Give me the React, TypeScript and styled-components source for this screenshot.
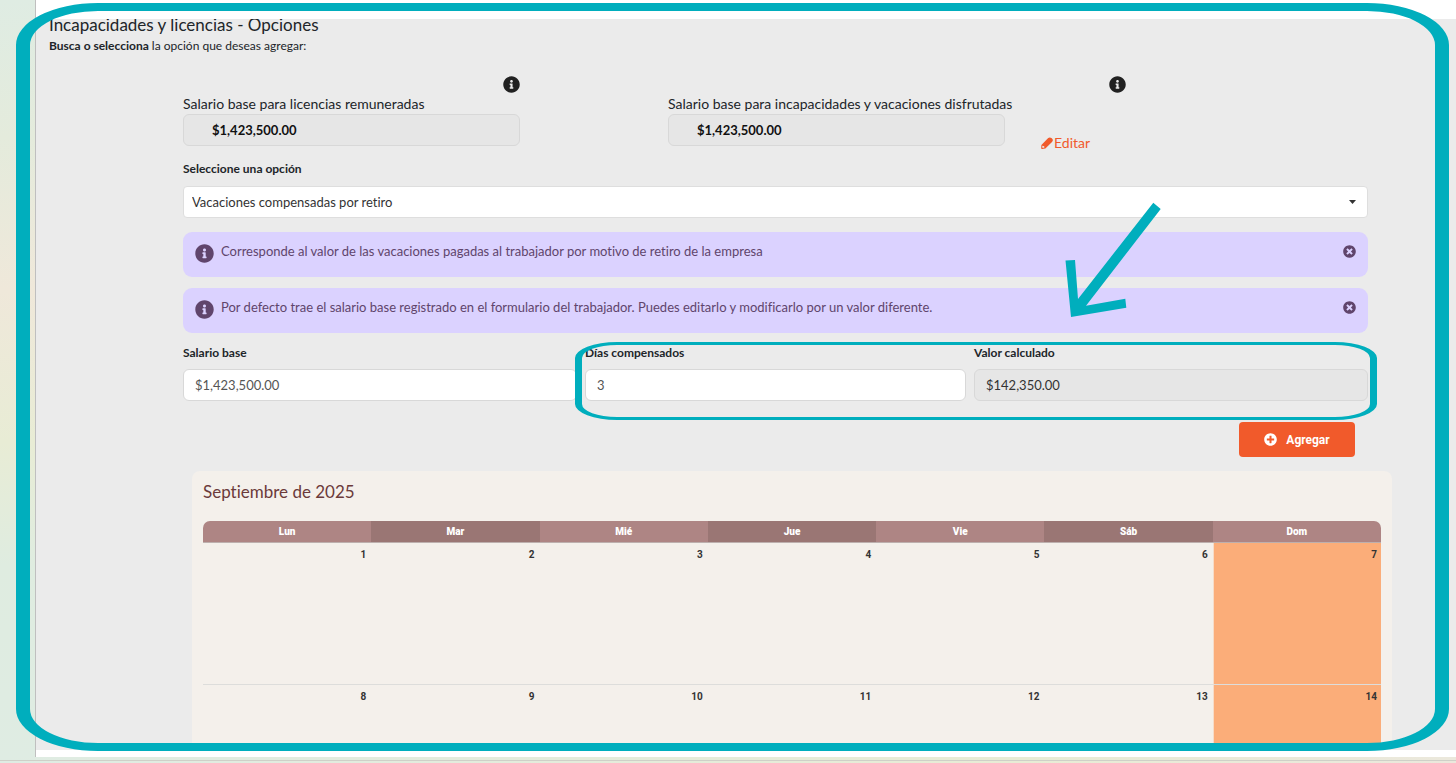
import React, { useState } from "react";
import styled, { createGlobalStyle, css } from "styled-components";
import { FaInfoCircle, FaPlusCircle, FaTimesCircle } from "react-icons/fa";

const TEAL = "#00aebd";
const ORANGE = "#f15a2b";

const GlobalStyle = createGlobalStyle`
  * { box-sizing: border-box; }
  html, body, #root { height: 100%; }
  body {
    margin: 0;
    font-family: Lato, "Liberation Sans", sans-serif;
    font-size: 13px;
    font-variant-ligatures: none;
    color: #212529;
  }
  input, select, button { font: inherit; color: inherit; }
`;

const Page = styled.div`
  position: relative;
  height: 100vh;
  display: flex;
  flex-direction: column;
  overflow: hidden;
  background: linear-gradient(#dfece3 0%, #e4ebdc 18%, #efe8da 38%, #e8ecd5 58%, #dfece0 74%, #dfece3 100%);
`;

const Sheet = styled.div`
  flex: 1;
  min-height: 0;
  margin-left: 35px;
  padding: 19px 0 7px;
  border-left: 1px solid #bfbfbf;
  background: #fff;
  display: flex;
`;

const Footer = styled.footer`
  height: 6px;
  padding-top: 3px;
  background: linear-gradient(90deg, #dfece3, #e8ecd5 70%, #ebe8dc);

  &::before {
    content: "";
    display: block;
    height: 1px;
    background: #cfd0c8;
  }
`;

const Panel = styled.main`
  flex: 1;
  min-width: 0;
  overflow: hidden;
  background: #ebebeb;
`;

const Heading = styled.header`
  padding-left: 13px;
`;

const Title = styled.h1`
  margin: 0;
  font-size: 17px;
  line-height: 12px;
  font-weight: 400;
`;

const Lead = styled.p`
  margin: 6px 0 0;
  font-size: 12px;
  line-height: 18px;
`;

const Content = styled.section`
  padding: 21px 88px 0 147px;
`;

const BaseRow = styled.div`
  display: grid;
  grid-template-columns: 337fr 148fr 458fr 242fr;

  > * { min-width: 0; }
`;

const InfoLine = styled.div`
  height: 18px;
  display: flex;
  justify-content: flex-end;
`;

const BaseLine = styled.div`
  display: flex;
  gap: 36px;
`;

const BaseField = styled.div`
  flex: 1;
  min-width: 0;
`;

const BaseLabel = styled.label`
  display: block;
  font-size: 14px;
  line-height: 20px;
  white-space: nowrap;
`;

const inputBox = css`
  display: block;
  width: 100%;
  height: 32px;
  border: 1px solid #d8d8d8;
  border-radius: 6px;
  background: #fff;
  outline: none;
`;

const BaseInput = styled.input`
  ${inputBox}
  padding: 0 28px;
  font-weight: 700;
  color: #111;
  background: #e6e6e6;
`;

const EditLink = styled.a`
  width: 85px;
  align-self: flex-start;
  display: flex;
  align-items: center;
  gap: 1px;
  padding-top: 39px;
  font-size: 14px;
  line-height: 20px;
  color: ${ORANGE};
  text-decoration: none;
`;

const Label = styled.label`
  display: block;
  font-size: 12px;
  font-weight: 700;
  line-height: 18px;
`;

const OptionField = styled.div`
  margin-top: 7px;
`;

const SelectBox = styled.div`
  display: grid;
  align-items: center;
  margin-top: 8px;

  > * { grid-area: 1 / 1; }
  > svg { justify-self: end; margin-right: 12px; pointer-events: none; }
`;

const Select = styled.select`
  width: 100%;
  height: 32px;
  padding: 0 30px 0 8px;
  border: 1px solid #dedede;
  border-radius: 4px;
  background: #fff;
  color: #333;
  appearance: none;
`;

const Alerts = styled.div`
  display: grid;
  gap: 11px;
  margin-top: 14px;
`;

const AlertBox = styled.div`
  display: flex;
  align-items: flex-start;
  height: 45px;
  padding: 10px 12px;
  border-radius: 9px;
  background: #dbd2ff;
  color: #60456c;
`;

const AlertText = styled.p`
  flex: 1;
  margin: 0 0 0 7px;
  line-height: 18px;
`;

const AlertIcon = styled(FaInfoCircle)`
  flex: none;
  margin-top: 2px;
`;

const CloseButton = styled.button`
  display: flex;
  padding: 0;
  margin-top: 3px;
  border: 0;
  background: none;
`;

const ValueRow = styled.div`
  display: grid;
  grid-template-columns: 394fr 381fr 394fr;
  gap: 8px;
`;

const ValueInput = styled.input`
  ${inputBox}
  margin-top: 7px;
  padding: 0 11px;
  color: #555;

  &:read-only {
    color: #333;
    background: #e6e6e6;
  }
`;

const Actions = styled.div`
  display: flex;
  justify-content: flex-end;
  padding: 21px 13px 14px;
`;

const AddButton = styled.button`
  display: flex;
  align-items: center;
  justify-content: center;
  gap: 9px;
  width: 116px;
  height: 35px;
  border: 0;
  border-radius: 4px;
  background: ${ORANGE};
  color: #fff;
  font-family: Roboto, sans-serif;
  font-size: 12px;
  font-weight: 700;
`;

const CalendarCard = styled.section`
  margin: 0 -24px 0 9px;
  padding: 10px 11px 0;
  border-radius: 8px;
  background: #f4f0eb;
`;

const Month = styled.h2`
  margin: 0;
  font-size: 17px;
  line-height: 22px;
  font-weight: 400;
  color: #6b3a3a;
`;

const Calendar = styled.table`
  width: 100%;
  margin-top: 18px;
  border-spacing: 0;
  table-layout: fixed;
  font-family: Roboto, sans-serif;
  font-size: 10px;
`;

const DayName = styled.th`
  height: 22px;
  padding: 0;
  border-bottom: 1px solid #bdb0ae;
  font-weight: 900;
  color: #fff;
  background: #ae8584;

  &:nth-child(even) { background: #9a7674; }
  &:first-child { border-top-left-radius: 7px; }
  &:last-child { border-top-right-radius: 7px; }
`;

const Day = styled.td`
  height: 142px;
  padding: 6px 5px 0 0;
  border-bottom: 1px solid #dddddb;
  vertical-align: top;
  text-align: right;
  line-height: 12px;
  font-weight: 700;
  color: #333;

  &:last-child { background: #fbad79; padding-right: 4px; border-left: 1px solid #f7dcc8; }
`;

const PanelFrame = styled.div`
  position: absolute;
  inset: 3px 7px 12px 16px;
  border: solid ${TEAL};
  border-width: 8px 14px;
  border-radius: 82px / 42px;
  pointer-events: none;
`;

const Marked = styled.div`
  position: relative;
  margin-top: 11px;
`;

const FieldsFrame = styled.div`
  position: absolute;
  top: -2px;
  bottom: -19px;
  right: -9px;
  left: calc(33.33% - 3px);
  border: solid ${TEAL};
  border-width: 3px 7px;
  border-radius: 42px / 16px;
  pointer-events: none;
`;

const Arrow = styled.svg`
  position: absolute;
  right: 207px;
  bottom: 84px;
  pointer-events: none;
`;

const PencilIcon = () => (
  <svg width="12" height="12" viewBox="0 0 12 12" aria-hidden="true">
    <path d="M.4 8 7.2 1.1a2.4 2.4 0 0 1 3.2 0l.6.5a2.4 2.4 0 0 1 0 3.4L4.4 11.5l-3.2.4a.9.9 0 0 1-1-1z" fill={ORANGE} />
    <path d="M1.2 8.8 3.2 9.2 3.4 10.6 1.5 11z" fill="#ebebeb" />
  </svg>
);

const options = ["Vacaciones compensadas por retiro", "Vacaciones disfrutadas", "Incapacidad"];
const days = ["Lun", "Mar", "Mié", "Jue", "Vie", "Sáb", "Dom"];
const weeks = [
  [1, 2, 3, 4, 5, 6, 7],
  [8, 9, 10, 11, 12, 13, 14],
];

function Notice({ children }: { children: React.ReactNode }) {
  return (
    <AlertBox role="status">
      <AlertIcon size={19} />
      <AlertText>{children}</AlertText>
      <CloseButton aria-label="Cerrar"><FaTimesCircle size={13} /></CloseButton>
    </AlertBox>
  );
}

export default function App() {
  const [option, setOption] = useState(options[0]);
  const [salary, setSalary] = useState("$1,423,500.00");
  const [count, setCount] = useState("3");

  return (
    <>
      <GlobalStyle />
      <Page>
        <Sheet>
          <Panel>
            <Heading>
              <Title>Incapacidades y licencias - Opciones</Title>
              <Lead><b>Busca o selecciona</b> la opción que deseas agregar:</Lead>
            </Heading>
            <Content>
              <BaseRow>
                <div>
                  <InfoLine><FaInfoCircle size={17} color="#212121" /></InfoLine>
                  <BaseLabel htmlFor="licencias">Salario base para licencias remuneradas</BaseLabel>
                  <BaseInput id="licencias" readOnly value="$1,423,500.00" />
                </div>
                <span />
                <div>
                  <InfoLine><FaInfoCircle size={17} color="#212121" /></InfoLine>
                  <BaseLine>
                    <BaseField>
                      <BaseLabel htmlFor="incapacidades">Salario base para incapacidades y vacaciones disfrutadas</BaseLabel>
                      <BaseInput id="incapacidades" readOnly value="$1,423,500.00" />
                    </BaseField>
                    <EditLink href="#editar"><PencilIcon />Editar</EditLink>
                  </BaseLine>
                </div>
              </BaseRow>

              <OptionField>
                <Label htmlFor="opcion">Seleccione una opción</Label>
                <SelectBox>
                  <Select id="opcion" value={option} onChange={(e) => setOption(e.target.value)}>
                    {options.map((o) => <option key={o}>{o}</option>)}
                  </Select>
                  <svg width="7" height="4" viewBox="0 0 7 4" aria-hidden="true"><path d="M0 0h7L3.5 4z" fill="#333" /></svg>
                </SelectBox>
              </OptionField>

              <Alerts>
                <Notice>Corresponde al valor de las vacaciones pagadas al trabajador por motivo de retiro de la empresa</Notice>
                <Notice>Por defecto trae el salario base registrado en el formulario del trabajador. Puedes editarlo y modificarlo por un valor diferente.</Notice>
              </Alerts>

              <Marked>
                <ValueRow>
                  <div>
                    <Label htmlFor="salario">Salario base</Label>
                    <ValueInput id="salario" value={salary} onChange={(e) => setSalary(e.target.value)} />
                  </div>
                  <div>
                    <Label htmlFor="dias">Días compensados</Label>
                    <ValueInput id="dias" value={count} onChange={(e) => setCount(e.target.value)} />
                  </div>
                  <div>
                    <Label htmlFor="valor">Valor calculado</Label>
                    <ValueInput id="valor" readOnly value="$142,350.00" />
                  </div>
                </ValueRow>
                <FieldsFrame />
                <Arrow width="97" height="116" viewBox="1064 201 97 116" aria-hidden="true">
                  <path d="M1153.3 202.7 1160.7 209 1086 305.7 1125.3 298.7 1126.3 307.7 1071 317 1065.5 260.5 1075 260 1078 299z" fill={TEAL} />
                </Arrow>
              </Marked>

              <Actions>
                <AddButton><FaPlusCircle size={13} />Agregar</AddButton>
              </Actions>

              <CalendarCard>
                <Month>Septiembre de 2025</Month>
                <Calendar>
                  <thead>
                    <tr>{days.map((d) => <DayName key={d} scope="col">{d}</DayName>)}</tr>
                  </thead>
                  <tbody>
                    {weeks.map((week) => (
                      <tr key={week[0]}>{week.map((d) => <Day key={d}>{d}</Day>)}</tr>
                    ))}
                  </tbody>
                </Calendar>
              </CalendarCard>
            </Content>
          </Panel>
        </Sheet>
        <Footer />
        <PanelFrame />
      </Page>
    </>
  );
}
